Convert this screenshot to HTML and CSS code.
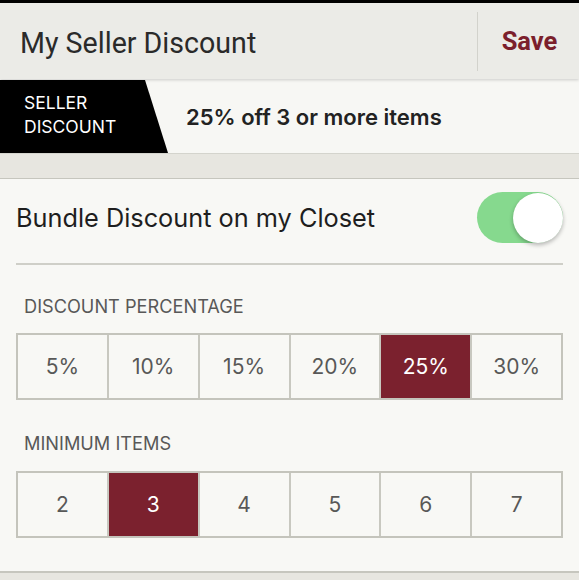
FILE: index.html
```html
<!DOCTYPE html>
<html>
<head>
<meta charset="utf-8">
<link rel="stylesheet" href="styles.css">
</head>
<body>
<div class="statusbar"></div>
<header class="appbar">
  <h1 class="title">My Seller Discount</h1>
  <div class="vdiv"></div>
  <button class="save">Save</button>
</header>
<div class="banner">
  <div class="tag">SELLER<br>DISCOUNT</div>
  <div class="summary">25% off 3 or more items</div>
</div>
<div class="strip"></div>
<main class="content">
  <div class="toggle-row">
    <span class="toggle-label">Bundle Discount on my Closet</span>
    <div class="switch"><div class="knob"></div></div>
  </div>
  <div class="hr"></div>
  <div class="label first">DISCOUNT PERCENTAGE</div>
  <div class="seg">
    <div class="cell">5%</div>
    <div class="cell">10%</div>
    <div class="cell">15%</div>
    <div class="cell">20%</div>
    <div class="cell on">25%</div>
    <div class="cell">30%</div>
  </div>
  <div class="label">MINIMUM ITEMS</div>
  <div class="seg">
    <div class="cell">2</div>
    <div class="cell on">3</div>
    <div class="cell">4</div>
    <div class="cell">5</div>
    <div class="cell">6</div>
    <div class="cell">7</div>
  </div>
</main>
<div class="strip bottom"></div>
</body>
</html>
```

FILE: styles.css
```css
* { box-sizing: border-box; }
html, body { margin: 0; padding: 0; }
body {
  width: 579px;
  height: 580px;
  overflow: hidden;
  background: #f8f8f5;
  font-family: Inter, "Open Sans", sans-serif;
}
.statusbar { height: 3px; background: #000; }
.appbar {
  height: 76px;
  display: flex;
  align-items: center;
  background: #ebebe7;
  box-shadow: 0 1px 3px rgba(0,0,0,0.18);
  position: relative;
  z-index: 1;
}
.title {
  margin: 3px 0 0 20px;
  flex: 1;
  font-family: Roboto, sans-serif;
  font-weight: 400;
  font-size: 28.6px;
  color: #2a2a2a;
}
.vdiv { width: 1px; height: 59px; background: #d2d2cc; }
.save {
  width: 101px;
  border: 0;
  background: none;
  padding: 0 0 0 2px;
  font-family: Roboto, sans-serif;
  font-weight: 700;
  font-size: 25.5px;
  color: #7b1f2c;
}
.banner {
  height: 73px;
  margin-top: 1px;
  display: flex;
  align-items: center;
  background: #f7f7f4;
}
.tag {
  align-self: stretch;
  width: 168px;
  padding: 11px 0 0 24px;
  background: #000;
  color: #fff;
  font-size: 17.5px;
  line-height: 24px;
  clip-path: polygon(0 0, 145px 0, 168px 100%, 0 100%);
}
.summary {
  margin-left: 18px;
  font-size: 22px;
  font-weight: 600;
  color: #222;
}
.strip {
  height: 26px;
  background: #e7e6e0;
  border-top: 1px solid #d4d4cd;
  border-bottom: 1px solid #c6c6be;
}
.strip.bottom { height: 12px; border-bottom: 0; border-top: 2px solid #c6c6be; }
.content { padding: 0 16px; height: 392px; }
.toggle-row {
  display: flex;
  align-items: center;
  justify-content: space-between;
  padding: 13px 0 20px;
}
.toggle-label { font-size: 25.3px; color: #1e1e1e; }
.switch {
  width: 86px;
  height: 51px;
  border-radius: 26px;
  background: #86d98e;
  display: flex;
  justify-content: flex-end;
  align-items: center;
}
.knob {
  width: 50px;
  height: 50px;
  border-radius: 50%;
  background: #fff;
  box-shadow: 0 2px 4px rgba(0,0,0,0.28);
}
.hr { height: 2px; background: #cfcfc8; }
.label {
  padding: 33px 0 18px 8px;
  font-size: 18.2px;
  color: #585858;
  line-height: 20px;
}
.label.first { padding: 31px 0 17px 8px; }
.seg {
  display: grid;
  grid-template-columns: repeat(6, 1fr);
  gap: 2px;
  background: #c8c8c0;
  border: 2px solid #c4c4bc;
  height: 67px;
}
.cell {
  display: flex;
  align-items: center;
  justify-content: center;
  font-size: 21px;
  color: #585858;
  background: #f8f8f5;
}
.cell.on { background: #7b212e; color: #fff; }
```
